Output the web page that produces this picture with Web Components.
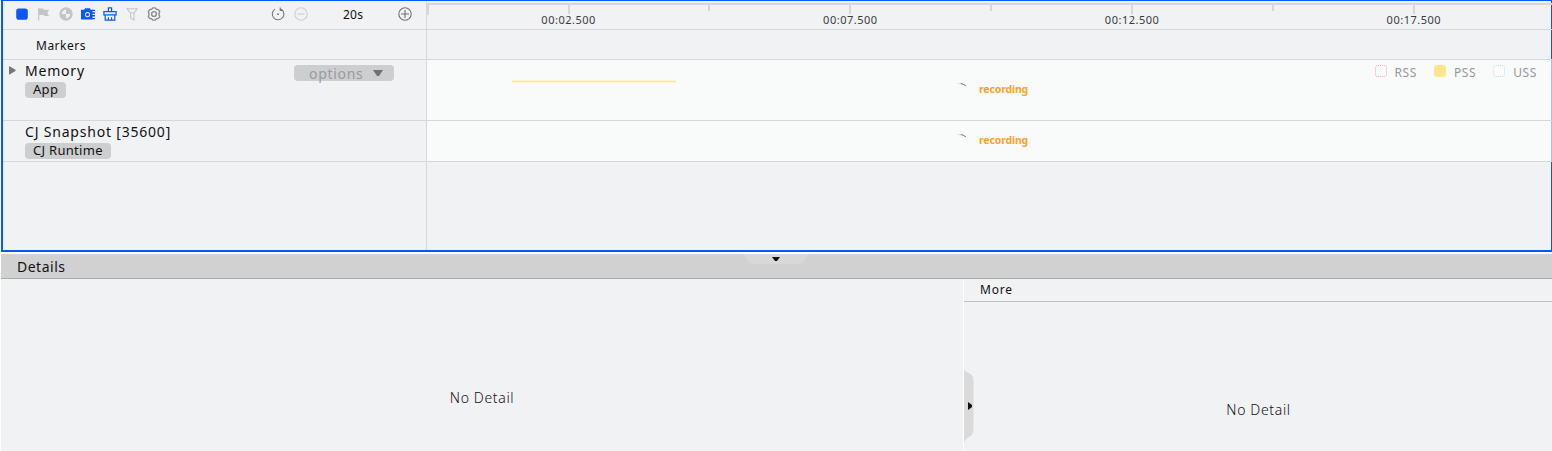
<!DOCTYPE html>
<html lang="en"><head><meta charset="utf-8"><title>Profiler</title>
<style>html,body{margin:0;background:#fff;height:451px;overflow:hidden}</style></head>
<body><profiler-app></profiler-app>
<script>
const define=(name,html)=>{
  const t=document.createElement('template');t.innerHTML=html;
  customElements.define(name,class extends HTMLElement{
    constructor(){super();this.attachShadow({mode:'open'}).append(t.content.cloneNode(true));}
  });
};

define('ui-tag',`<style>:host{display:block;width:max-content;height:16px;padding:0 8px;border-radius:4px;background:#cdcecf;font-size:13px;line-height:15px;letter-spacing:var(--ls,.3px);box-sizing:border-box}</style><slot></slot>`);

define('tool-bar',`<style>
:host{display:flex;height:27px;align-items:center;box-sizing:border-box;padding:0 14px 3px 12px}
svg{display:block;width:14px;height:14px;margin-right:8px;overflow:visible;fill:none}
.gap{flex:1}.time{font-size:12px;line-height:14px;width:24px;margin:2px 31px 0 35px;letter-spacing:.2px}
svg.m{margin-right:9px}.last{margin-right:0}
</style>
<svg viewBox="0 0 14 14"><rect x="1.2" y="1.5" width="11.6" height="11.2" rx="2.8" fill="#0a59f7"/></svg>
<svg viewBox="0 0 14 14"><path d="M1.7 1v12.5" stroke="#c4c5c7" stroke-width="1.2"/><path d="M2 1.5h4.5v1.3H12L10.5 6l1.5 3H7V8H2z" fill="#c4c5c7"/></svg>
<svg viewBox="0 0 14 14"><circle cx="7" cy="7" r="6.7" fill="#c4c5c7"/><path d="M7 7V2.8A4.2 4.2 0 0 0 2.8 7zM7 7v4.2A4.2 4.2 0 0 0 11.2 7z" fill="#f1f2f4"/></svg>
<svg viewBox="0 0 14 14"><path d="M0 2.8h3.2L4 1.2h5l.8 1.6H11.5v9.7H0z" fill="#0a59f7"/><path d="M11 3.4h3M11 6h3M11 8.8h3M11 11.6h3" stroke="#0a59f7" stroke-width="1.4"/><circle cx="6.5" cy="7.6" r="2.6" fill="#f1f2f4"/><circle cx="6.5" cy="7.6" r="1.6" fill="#0a59f7"/></svg>
<svg viewBox="0 0 14 14" stroke="#0a59f7" stroke-width="1.2"><path d="M5.4 4.7V.8h3.2v3.9M.9 7.8V4.7h12.2v3.1zM2.2 8v5.2h9.6V8M5.4 13v-2.7M8.6 13v-2.7"/></svg>
<svg viewBox="0 0 14 14" stroke="#c4c5c7" stroke-width="1.1"><path d="M2 1.8h10.2L9 6.2v6.6L5.6 11V6.2zM5.6 6h3.2"/></svg>
<svg viewBox="0 0 14 14" stroke="#888b8f" stroke-width="1.4"><path d="M5.8.9h2.4l1.2 1.3 1.9.4 1.4 1.8-.6 1.7v1.8l.6 1.7-1.4 1.8-1.9.4-1.2 1.3H5.8l-1.2-1.3-1.9-.4-1.4-1.8.6-1.7V6.1l-.6-1.7 1.4-1.8 1.9-.4z" stroke-linejoin="round"/><circle cx="7" cy="7" r="2.4"/></svg>
<span class="gap"></span>
<svg class="m" viewBox="0 0 14 14" stroke="#77797c"><path d="M8.9 1.5A5.8 5.8 0 1 1 4 2.1M9.2.5v3h2.9" stroke-width="1.1"/><circle cx="7" cy="7.2" r=".9" fill="#666" stroke="none"/></svg>
<svg style="margin:0" viewBox="0 0 14 14" stroke="#cdcecf" stroke-width="1.1"><circle cx="7" cy="7" r="6.2"/><path d="M3.5 7h7"/></svg>
<span class="time">20s</span>
<svg class="last" viewBox="0 0 14 14" stroke="#6f7174" stroke-width="1.1"><circle cx="7" cy="7" r="6.2"/><path d="M3 7h8M7 3v8"/></svg>`);

define('time-ruler',`<style>
:host{display:flex;height:27px;padding:2px 0 0;box-sizing:border-box;overflow:hidden;margin-left:-1px;background:linear-gradient(#d6d7d9,#d6d7d9) 0 2px/100% 2px no-repeat}
div{flex:0 0 281.75px;display:grid;grid-template-columns:1fr 1fr;grid-template-rows:11px 14px;text-align:center;font-size:11px;color:#3a3b3d}
i{display:block;height:11px;border-right:2px solid #d6d7d9;box-sizing:border-box}
i+i{height:8px}
span{grid-column:1/3;line-height:14px;letter-spacing:.5px;padding-right:2px;margin-top:-1px}
.edge{flex:0 0 3px;height:12px;margin-right:-.3px;background:#d6d7d9}
</style><b class="edge"></b><div><i></i><i></i><span>00:02.500</span></div><div><i></i><i></i><span>00:07.500</span></div><div><i></i><i></i><span>00:12.500</span></div><div><i></i><i></i><span>00:17.500</span></div>`);

define('track-row',`<style>
:host{display:grid;grid-template-columns:423px 1fr;height:var(--h);border-bottom:1px solid #d6d7d9;box-sizing:border-box;margin-right:-1px}
.l{min-width:0}.r{border-left:1px solid #d6d7d9;min-width:0;background:var(--lane,transparent)}
</style><div class="l"><slot name="label"></slot></div><div class="r"><slot></slot></div>`);

define('options-button',`<style>
:host{display:flex;align-items:center;width:100px;height:16px;border-radius:4px;background:#cdcecf;color:#999b9d;font-size:14px;line-height:16px;box-sizing:border-box;padding-left:15px;letter-spacing:.7px}
span{padding-top:1px}
svg{margin-left:10px}</style><span><slot></slot></span><svg width="10" height="6"><path d="M0 0h10L6 6H4z" fill="#6d7278"/></svg>`);

define('track-label',`<style>
:host{display:flex;justify-content:space-between;padding:1px 32px 0 0}
.a{width:22px;flex:none;padding:5px 0 0 6px;box-sizing:border-box}svg{display:block}
.t{flex:1;font-size:14px;line-height:19px;letter-spacing:var(--tls,.8px);white-space:nowrap}
.tag{margin-top:2px}
</style><div class="a"><slot name="arrow"></slot></div><div class="t"><slot></slot><div class="tag"><slot name="tag"></slot></div></div><slot name="action"></slot>`);

define('recording-state',`<style>
:host{display:flex;align-items:center;height:14px;color:#faa22d;font-weight:700;font-size:10.5px;line-height:14px;letter-spacing:-.15px}
svg{margin-right:12px}</style>
<svg width="9" height="14" fill="none"><path d="M0 1.6Q4 1 7.8 4" stroke="#dadcdc"/><path d="M2.8 1.5Q5.5 2 7.8 3.7" stroke="#777" stroke-width="1"/></svg><slot></slot>`);

define('legend-item',`<style>
:host{display:flex;align-items:center;height:14px;font-size:12px;color:#969899;letter-spacing:.6px;line-height:14px}
i{box-sizing:border-box;width:12px;height:12px;border:1px dotted var(--c);background:var(--f,transparent);border-radius:3px;margin:-2px 8px 0 0}span{padding-top:1px}</style><i></i><span><slot></slot></span>`);

define('memory-lane',`<style>
:host{display:flex;position:relative;height:60px;justify-content:flex-end}
.line{position:absolute;left:85px;top:20px;width:164px;height:3px;background:linear-gradient(#fdf4cf 1px,#ffe694 1px 2px,#fdf4cf 2px)}
recording-state{position:absolute;left:531px;top:22px}
.legend{display:flex;gap:17px;padding:5px 15px 0 0}
</style><div class="line"></div><recording-state>recording</recording-state>
<div class="legend"><legend-item style="--c:#f2a5bd">RSS</legend-item><legend-item style="--c:#ffe68c;--f:#ffe68c">PSS</legend-item><legend-item style="--c:#b5e5df">USS</legend-item></div>`);

define('detail-panels',`<style>
:host{display:block;margin-left:1px;height:197px}
.bar{height:25px;box-sizing:border-box;background:#d1d1d1;border-bottom:1px solid #a8a9ab;padding-left:16px;font-size:14px;line-height:25px;letter-spacing:.5px;position:relative}
.bar svg{position:absolute;left:740px;top:0}
.body{display:grid;grid-template-columns:963px 1fr;height:172px}
.left{display:flex;justify-content:center;padding-top:109px;box-sizing:border-box;border-right:1px solid #fff}
.e{font-size:14px;line-height:20px;letter-spacing:.65px;color:#111;font-weight:300}
.right{position:relative}
.more{height:23px;box-sizing:border-box;border-bottom:1px solid #bdbec0;padding-left:16px;font-size:12px;line-height:21px;letter-spacing:.8px}
.right .e{text-align:center;margin-top:98px;padding-left:1px}
.right svg{position:absolute;left:0;top:90px}
</style>
<div class="bar">Details<svg width="70" height="11"><path d="M0 0Q4 1 6 6Q8 10 12 10H58Q62 10 64 6Q66 1 70 0z" fill="#d8d8d8"/><path d="M31 3h8l-3 4h-2z" fill="#111"/></svg></div>
<div class="body"><div class="left"><div class="e">No Detail</div></div>
<div class="right"><div class="more">More</div><div class="e">No Detail</div><svg width="11" height="74"><path d="M0 0Q1 3 5 4Q9.5 6 9.5 12V60Q9.5 66 5 68Q1 70 0 74z" fill="#dadada"/><path d="M4 33l4 3v2l-4 3z" fill="#111"/></svg></div></div>`);

define('profiler-app',`<style>
:host{display:grid;grid-template-rows:252px 197px;row-gap:2px;height:451px;font-family:"Noto Sans","Open Sans",sans-serif;color:#111}
.frame{margin-left:1px;background:#f1f2f4;border:2px solid #0a59f7;border-right-width:1px;border-top-width:1px;box-sizing:border-box;display:flex;flex-direction:column;width:1551px}
detail-panels{background:#f1f2f4}
.markers{font-size:12px;line-height:30px;padding:1px 0 0 33px;letter-spacing:.5px}
track-row{flex:none}
.rest{flex:1;margin-left:423px;border-left:1px solid #d6d7d9}
.rec{display:flex;padding:12px 0 0 531px}
svg{display:block}
</style>
<div class="frame">
<track-row style="--h:29px"><tool-bar slot="label" style="padding-top:1px;height:28px"></tool-bar><time-ruler></time-ruler></track-row>
<track-row style="--h:30px"><div slot="label" class="markers">Markers</div></track-row>
<track-row style="--h:61px;--lane:rgba(253,255,253,.62)"><track-label slot="label"><svg slot="arrow" width="7" height="9"><path d="M0 0 6.5 3.7v1.2L0 8.7z" fill="#74777b"/></svg>Memory<ui-tag slot="tag">App</ui-tag><options-button slot="action" style="margin-top:4px">options</options-button></track-label><memory-lane></memory-lane></track-row>
<track-row style="--h:41px;--lane:rgba(253,255,253,.62)"><track-label slot="label">CJ Snapshot [35600]<ui-tag slot="tag">CJ Runtime</ui-tag></track-label><div class="rec"><recording-state>recording</recording-state></div></track-row>
<div class="rest"></div></div>
<detail-panels></detail-panels>`);
</script></body></html>
